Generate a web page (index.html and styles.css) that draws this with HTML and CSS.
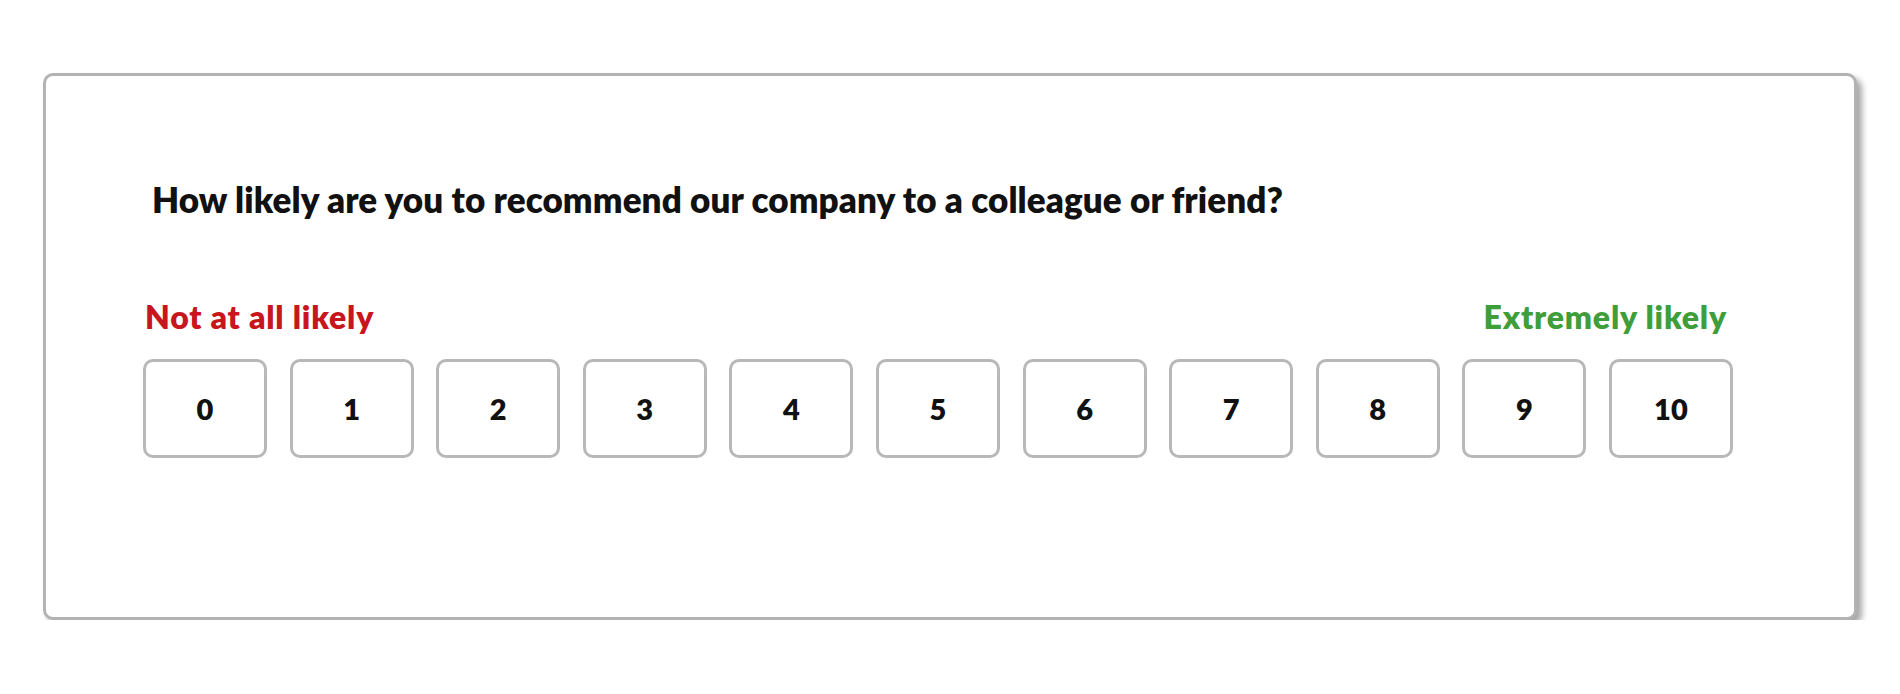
FILE: index.html
```html
<!DOCTYPE html>
<html lang="en">
<head>
  <meta charset="UTF-8">
  <meta name="viewport" content="width=device-width, initial-scale=1.0">
  <title>NPS Survey</title>
  <link rel="stylesheet" href="styles.css">
</head>
<body>
  <div class="card">
    <h1 class="question">How likely are you to recommend our company to a colleague or friend?</h1>
    <div class="scale">
      <div class="scale-labels">
        <span class="low">Not at all likely</span>
        <span class="high">Extremely likely</span>
      </div>
      <div class="scale-buttons">
        <button class="score">0</button>
        <button class="score">1</button>
        <button class="score">2</button>
        <button class="score">3</button>
        <button class="score">4</button>
        <button class="score">5</button>
        <button class="score">6</button>
        <button class="score">7</button>
        <button class="score">8</button>
        <button class="score">9</button>
        <button class="score">10</button>
      </div>
    </div>
  </div>
</body>
</html>
```

FILE: styles.css
```css
body {
  margin: 0;
  background-color: #ffffff;
  font-family: 'Lato', 'Noto Sans', sans-serif;
  color: #111111;
}

.card {
  box-sizing: border-box;
  width: 1814px;
  height: 547px;
  margin: 73px 0 0 43px;
  padding: 106px 0 0 97px;
  background-color: #ffffff;
  border: 3px solid #b3b3b3;
  border-radius: 10px;
  box-shadow: 5px 5px 6px rgba(0, 0, 0, 0.35);
}

.question {
  margin: 0 0 0 9px;
  font-size: 35px;
  line-height: 35px;
  font-weight: 800;
  letter-spacing: 0.1px;
}

.scale {
  width: 1590px;
  margin-top: 84px;
}

.scale-labels {
  display: flex;
  justify-content: space-between;
  padding: 0 6px 0 2px;
  font-size: 32px;
  line-height: 32px;
  font-weight: 800;
  letter-spacing: 0.8px;
}

.low {
  color: #c8161d; /* Red */
}

.high {
  color: #3f9e3a; /* Green */
}

.scale-buttons {
  display: flex;
  justify-content: space-between;
  margin-top: 26px;
}

.score {
  box-sizing: border-box;
  width: 124px;
  height: 99px;
  padding: 0;
  background-color: #ffffff;
  border: 3px solid #b8b8b8;
  border-radius: 10px;
  font-family: 'Lato', 'Noto Sans', sans-serif;
  font-size: 29px;
  font-weight: 800;
  color: #111111;
}
```
